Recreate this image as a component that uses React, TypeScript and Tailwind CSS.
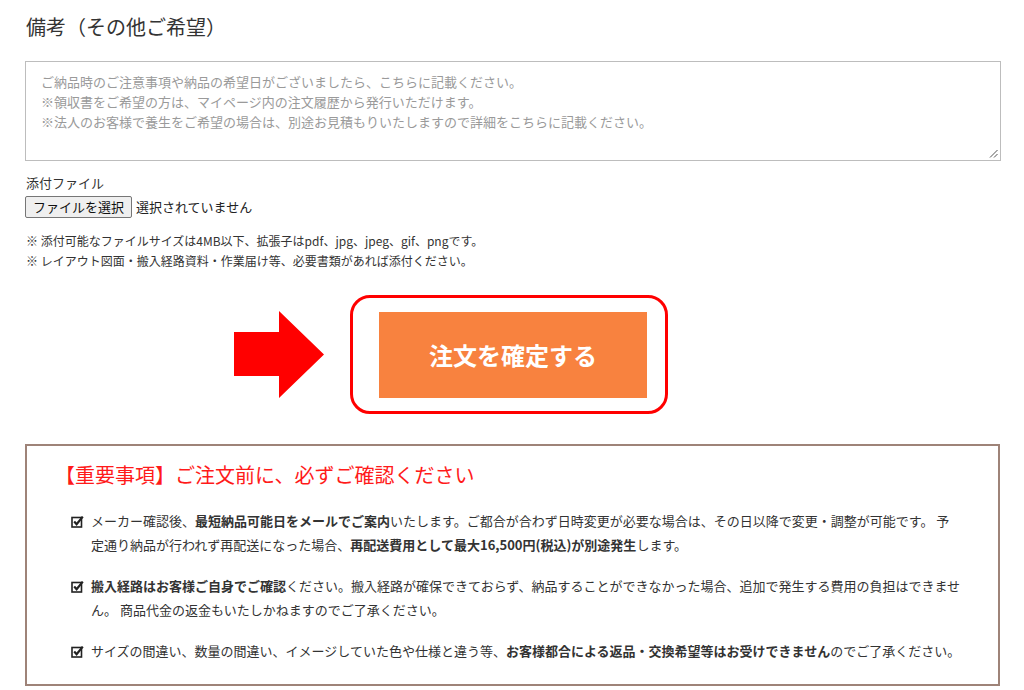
import React from "react";

const font = { fontFamily: '"Noto Sans CJK JP", "Noto Sans", sans-serif' };

function Check() {
  return (
    <svg width="13" height="13" viewBox="0 0 13 13" className="shrink-0">
      <rect x="1" y="2.5" width="9.5" height="9.5" fill="none" stroke="#222" strokeWidth="1.6" />
      <path d="M3.2 6.6 L5.6 9.2 L11.8 1.6" fill="none" stroke="#222" strokeWidth="2.2" />
    </svg>
  );
}

function Item({ children }: { children: React.ReactNode }) {
  return (
    <div className="flex items-start gap-[7px] pl-[44px]">
      <div className="h-[24px] flex items-center">
        <Check />
      </div>
      <p className="w-[872px] text-[13px] leading-[24px] text-[#333]">{children}</p>
    </div>
  );
}

export default function App() {
  return (
    <div className="min-h-[690px] bg-white" style={font}>
      <div className="pl-[25px] w-[1001px] pt-[13px]">
        <h2 className="text-[20px] leading-[28px] text-[#333] pl-[1px]">備考（その他ご希望）</h2>

        <div className="relative mt-[20px] h-[100px] w-[976px] border border-[#bdbdbd] bg-white px-[15px] pt-[10px] text-[13px] leading-[20px] text-[#9a9a9a]">
          <p>ご納品時のご注意事項や納品の希望日がございましたら、こちらに記載ください。</p>
          <p>※領収書をご希望の方は、マイページ内の注文履歴から発行いただけます。</p>
          <p>※法人のお客様で養生をご希望の場合は、別途お見積もりいたしますので詳細をこちらに記載ください。</p>
          <svg width="9" height="9" viewBox="0 0 9 9" className="absolute right-[2px] bottom-[2px]">
            <path d="M8.5 1 L1 8.5 M8.5 5 L5 8.5" stroke="#555" strokeWidth="1" />
          </svg>
        </div>

        <p className="mt-[12px] text-[13px] leading-[20px] text-[#333] pl-[1px]">添付ファイル</p>
        <div className="mt-[3px] flex items-center gap-[4px]">
          <div className="flex h-[22px] w-[107px] items-center justify-center rounded-[2px] border border-[#767676] bg-[#efefef] text-[13px] text-[#111]">
            ファイルを選択
          </div>
          <span className="text-[13px] text-[#222]">選択されていません</span>
        </div>

        <div className="mt-[13px] text-[12px] leading-[20px] text-[#333] pl-[1px]">
          <p>※ 添付可能なファイルサイズは4MB以下、拡張子はpdf、jpg、jpeg、gif、pngです。</p>
          <p>※ レイアウト図面・搬入経路資料・作業届け等、必要書類があれば添付ください。</p>
        </div>

        <div className="mt-[24px] flex items-center pl-[209px]">
          <svg width="90" height="87" viewBox="0 0 90 87" className="shrink-0">
            <polygon points="0,21 45,21 45,0 90,43.5 45,87 45,65 0,65" fill="#ff0000" />
          </svg>
          <div className="ml-[26px] h-[119px] w-[318px] rounded-[20px] border-[3px] border-[#ff0000] pl-[26px] pt-[14px]">
            <button className="flex h-[86px] w-[268px] items-center justify-center bg-[#f8823f] text-[24px] font-bold text-white" style={font}>
              注文を確定する
            </button>
          </div>
        </div>

        <div className="mt-[30px] h-[242px] w-[975px] border-2 border-[#9e8378] pt-[14px]">
          <h3 className="pl-[28px] text-[20px] leading-[30px] text-[#ff1a1a]">【重要事項】ご注文前に、必ずご確認ください</h3>
          <div className="mt-[19px] flex flex-col gap-[17px]">
            <Item>
              メーカー確認後、<b>最短納品可能日をメールでご案内</b>いたします。ご都合が合わず日時変更が必要な場合は、その日以降で変更・調整が可能です。 予<br />定通り納品が行われず再配送になった場合、<b>再配送費用として最大16,500円(税込)が別途発生</b>します。
            </Item>
            <Item>
              <b>搬入経路はお客様ご自身でご確認</b>ください。搬入経路が確保できておらず、納品することができなかった場合、追加で発生する費用の負担はできません。 商品代金の返金もいたしかねますのでご了承ください。
            </Item>
            <Item>
              サイズの間違い、数量の間違い、イメージしていた色や仕様と違う等、<b>お客様都合による返品・交換希望等はお受けできません</b>のでご了承ください。
            </Item>
          </div>
        </div>
      </div>
    </div>
  );
}
